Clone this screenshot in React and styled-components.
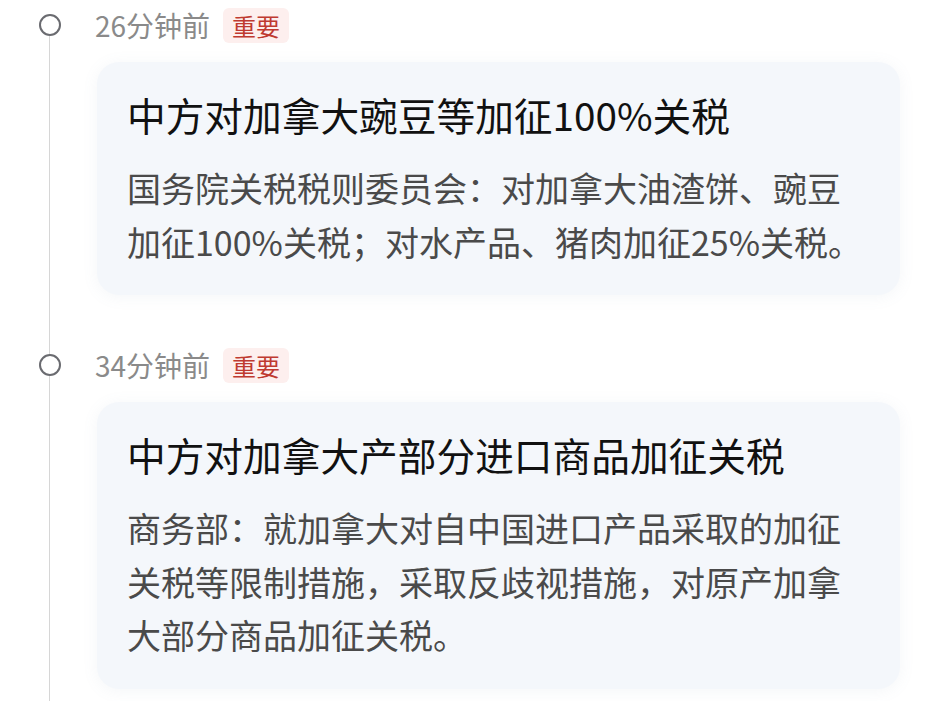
import styled, { createGlobalStyle } from "styled-components";

const GlobalStyle = createGlobalStyle`
    html, body {
        margin: 0;
        padding: 0;
        background: #ffffff;
    }
    body {
        font-family: "Noto Sans CJK SC", "Noto Sans", sans-serif;
    }
`;

const Timeline = styled.ul`
    list-style: none;
    margin: 0;
    padding: 0 0 12px 0;
    width: 942px;
`;

const Item = styled.li`
    display: grid;
    grid-template-columns: 95px 1fr;
    padding-bottom: ${(p) => (p.$last ? "0" : "45px")};
`;

// vertical rail with the hollow dot; the line runs through every item
const Rail = styled.div`
    position: relative;

    &::before {
        content: "";
        position: absolute;
        left: 49px;
        width: 1px;
        top: ${(p) => (p.$first ? "36px" : "0")};
        bottom: ${(p) => (p.$last ? "-12px" : "-45px")};
        background: #d6d6d6;
    }
`;

const Dot = styled.span`
    position: absolute;
    left: 39px;
    top: 14px;
    width: 18px;
    height: 18px;
    border: 2px solid #6a6b70;
    border-radius: 50%;
    background: #ffffff;
`;

const Body = styled.div`
    display: flex;
    flex-direction: column;
    gap: 12px;
`;

const Header = styled.div`
    display: flex;
    align-items: center;
    gap: 13px;
    height: 50px;
`;

const Time = styled.span`
    font-size: 28px;
    color: #8a8a8a;
`;

const Tag = styled.span`
    display: inline-flex;
    align-items: center;
    height: 35px;
    padding: 0 9px;
    border-radius: 6px;
    background: #fdefee;
    color: #bf3a30;
    font-size: 24px;
`;

const Card = styled.article`
    margin-left: 2px;
    width: 803px;
    box-sizing: border-box;
    padding: 26px 30px 27px 30px;
    border-radius: 22px;
    background: #f4f7fb;
    box-shadow: 0 2px 16px rgba(120, 135, 160, 0.08);
`;

const Title = styled.h3`
    margin: 0 0 21px 0;
    font-size: 38.7px;
    line-height: 52px;
    font-weight: 400;
    color: #111111;
`;

const Summary = styled.p`
    margin: 0;
    font-size: 34px;
    line-height: 53.5px;
    color: #4a4a4a;
`;

const news = [
    {
        time: "26分钟前",
        title: "中方对加拿大豌豆等加征100%关税",
        summary: "国务院关税税则委员会：对加拿大油渣饼、豌豆加征100%关税；对水产品、猪肉加征25%关税。",
    },
    {
        time: "34分钟前",
        title: "中方对加拿大产部分进口商品加征关税",
        summary: "商务部：就加拿大对自中国进口产品采取的加征关税等限制措施，采取反歧视措施，对原产加拿大部分商品加征关税。",
    },
];

export default function App() {
    return (
        <>
            <GlobalStyle />
            <Timeline>
                {news.map((n, i) => (
                    <Item key={n.title} $last={i === news.length - 1}>
                        <Rail $first={i === 0} $last={i === news.length - 1}>
                            <Dot />
                        </Rail>
                        <Body>
                            <Header>
                                <Time>{n.time}</Time>
                                <Tag>重要</Tag>
                            </Header>
                            <Card>
                                <Title>{n.title}</Title>
                                <Summary>{n.summary}</Summary>
                            </Card>
                        </Body>
                    </Item>
                ))}
            </Timeline>
        </>
    );
}
